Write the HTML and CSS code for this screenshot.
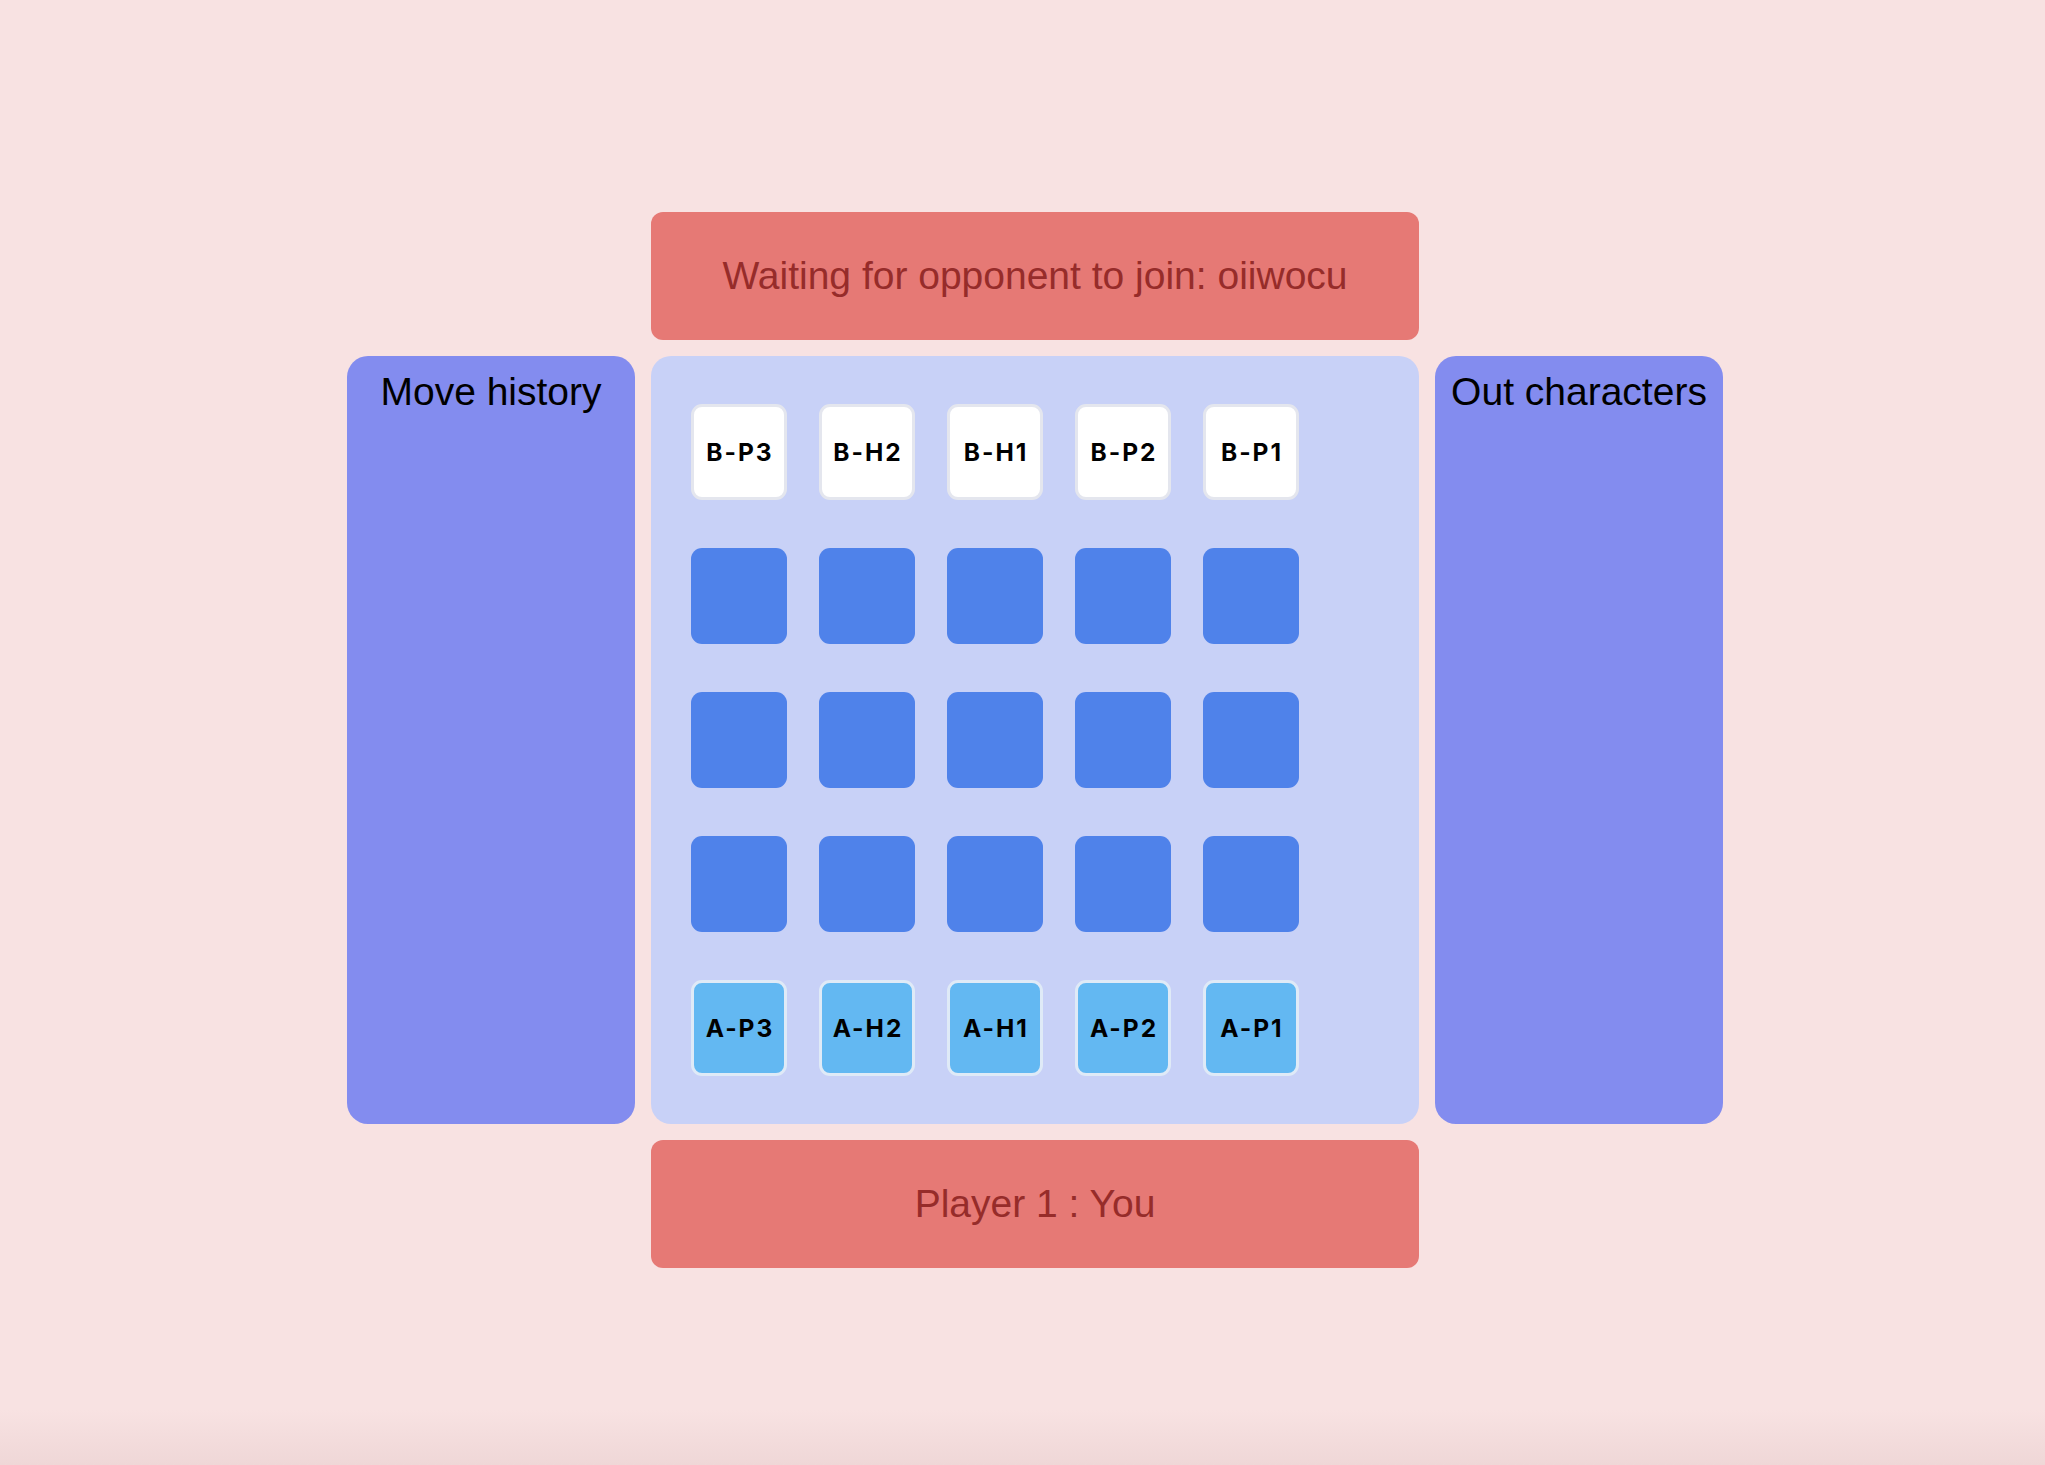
FILE: index.html
```html
<!DOCTYPE html>
<html lang="en">
<head>
<meta charset="utf-8">
<title>Game</title>
<link rel="stylesheet" href="styles.css">
</head>
<body>
<div class="page">
  <div class="layout">
    <div class="bar bar-top">Waiting for opponent to join: oiiwocu</div>
    <aside class="panel panel-left"><h2 class="panel-title">Move history</h2></aside>
    <main class="board">
      <div class="cell piece piece-b">B-P3</div>
      <div class="cell piece piece-b">B-H2</div>
      <div class="cell piece piece-b">B-H1</div>
      <div class="cell piece piece-b">B-P2</div>
      <div class="cell piece piece-b">B-P1</div>
      <div class="cell empty"></div>
      <div class="cell empty"></div>
      <div class="cell empty"></div>
      <div class="cell empty"></div>
      <div class="cell empty"></div>
      <div class="cell empty"></div>
      <div class="cell empty"></div>
      <div class="cell empty"></div>
      <div class="cell empty"></div>
      <div class="cell empty"></div>
      <div class="cell empty"></div>
      <div class="cell empty"></div>
      <div class="cell empty"></div>
      <div class="cell empty"></div>
      <div class="cell empty"></div>
      <div class="cell piece piece-a">A-P3</div>
      <div class="cell piece piece-a">A-H2</div>
      <div class="cell piece piece-a">A-H1</div>
      <div class="cell piece piece-a">A-P2</div>
      <div class="cell piece piece-a">A-P1</div>
    </main>
    <aside class="panel panel-right"><h2 class="panel-title">Out characters</h2></aside>
    <div class="bar bar-bottom">Player 1 : You</div>
  </div>
</div>
</body>
</html>
```

FILE: styles.css
```css
html, body {
  margin: 0;
  padding: 0;
}
body {
  background: #f8e2e2;
  font-family: "Liberation Sans", Arial, sans-serif;
  min-height: 1465px;
}
.page {
  min-height: 1465px;
  box-sizing: border-box;
  padding: 212px 0 0 347px;
  background: linear-gradient(to bottom, rgba(0,0,0,0) 0, rgba(0,0,0,0) 1410px, #efd7d7 1465px);
}
.layout {
  display: grid;
  grid-template-columns: 288px 768px 288px;
  grid-template-rows: 128px 768px 128px;
  column-gap: 16px;
  row-gap: 16px;
}
.bar {
  grid-column: 2;
  background: #e67975;
  color: #962c2a;
  border-radius: 12px;
  display: flex;
  align-items: center;
  justify-content: center;
  font-size: 39px;
}
.bar-top { grid-row: 1; }
.bar-bottom { grid-row: 3; }
.panel {
  grid-row: 2;
  background: #838cef;
  border-radius: 21px;
}
.panel-left { grid-column: 1; }
.panel-right { grid-column: 3; }
.panel-title {
  margin: 0;
  padding-top: 16px;
  font-size: 39px;
  line-height: 39px;
  font-weight: normal;
  color: #000;
  text-align: center;
  white-space: nowrap;
}
.board {
  grid-column: 2;
  grid-row: 2;
  background: #c8d1f7;
  border-radius: 20px;
  box-sizing: border-box;
  padding: 48px 40px;
  display: grid;
  grid-template-columns: repeat(5, 96px);
  grid-auto-rows: 96px;
  column-gap: 32px;
  row-gap: 48px;
}
.cell {
  box-sizing: border-box;
  border-radius: 11px;
  display: flex;
  align-items: center;
  justify-content: center;
}
.empty {
  background: #4f82ea;
}
.piece {
  border: 3px solid #e4e8f2;
  font-family: Inter, "Liberation Sans", sans-serif;
  font-size: 24.5px;
  font-weight: 700;
  letter-spacing: 2px;
  text-indent: 2px;
  color: #000;
}
.piece-b {
  background: #ffffff;
  border-color: #e4e6ee;
}
.piece-a {
  background: #63b8f2;
  border-color: #dfeaf7;
}
```
